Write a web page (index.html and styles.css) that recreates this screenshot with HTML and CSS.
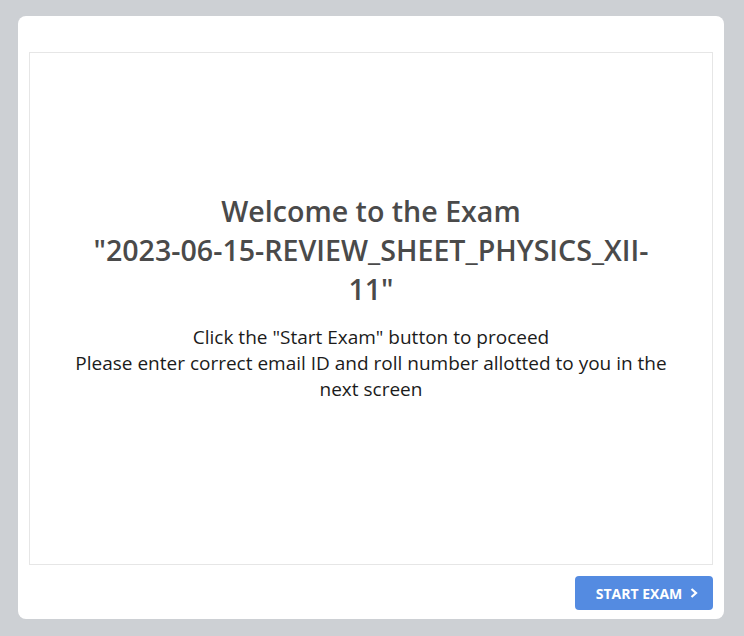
FILE: index.html
```html
<!DOCTYPE html>
<html>
<head>
<meta charset="utf-8">
<link rel="stylesheet" href="styles.css">
</head>
<body>
<div class="card">
  <div class="panel">
    <div class="content">
      <h1 class="title">Welcome to the Exam<br>"2023-06-15-REVIEW_SHEET_PHYSICS_XII-11"</h1>
      <p class="info">Click the "Start Exam" button to proceed<br>Please enter correct email ID and roll number allotted to you in the next screen</p>
    </div>
  </div>
  <div class="actions">
    <button class="start">START EXAM
      <svg class="chev" width="8" height="10" viewBox="0 0 8 10"><path d="M1.5 1 L6 5 L1.5 9" fill="none" stroke="#fff" stroke-width="2.2"/></svg>
    </button>
  </div>
</div>
</body>
</html>
```
FILE: styles.css
```css
html, body {
  margin: 0;
  padding: 0;
}
body {
  background: #cdd0d4;
  font-family: "Open Sans", sans-serif;
  padding: 16px 20px 17px 18px;
  height: 636px;
  box-sizing: border-box;
}
.card {
  background: #fff;
  border-radius: 8px;
  height: 603px;
  box-sizing: border-box;
  padding: 36px 11px 8px 11px;
  display: flex;
  flex-direction: column;
}
.panel {
  border: 1px solid #e6e6e6;
  height: 513px;
  box-sizing: border-box;
  display: flex;
  align-items: center;
  justify-content: center;
}
.content {
  width: 620px;
  text-align: center;
  margin-top: -24px;
}
.title {
  font-size: 28.6px;
  font-weight: 600;
  line-height: 39px;
  color: #4a4a4a;
  margin: 0 auto 16px;
  max-width: 575px;
}
.info {
  font-size: 19px;
  line-height: 26px;
  color: #1b1b1b;
  margin: 0;
}
.actions {
  display: flex;
  justify-content: flex-end;
  margin-top: 11px;
}
.start {
  background: #548be1;
  color: #fff;
  border: none;
  border-radius: 4px;
  width: 138px;
  height: 34px;
  font-family: "Open Sans", sans-serif;
  font-weight: 700;
  font-size: 14px;
  display: flex;
  align-items: center;
  justify-content: center;
  gap: 8px;
  padding: 0 0 0 6px;
}
```
